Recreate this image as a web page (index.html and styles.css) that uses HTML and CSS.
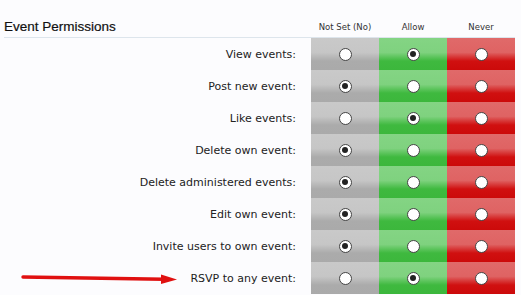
FILE: index.html
```html
<!DOCTYPE html>
<html>
<head>
<meta charset="utf-8">
<link rel="stylesheet" href="styles.css">
</head>
<body>
<div class="perm">
  <div class="head">
    <div class="title">Event Permissions</div>
    <div class="colh">Not Set (No)</div>
    <div class="colh">Allow</div>
    <div class="colh">Never</div>
  </div>
  <div class="row"><div class="label">View events:</div><div class="cell unset"><span class="radio"></span></div><div class="cell allow"><span class="radio on"></span></div><div class="cell never"><span class="radio"></span></div></div>
  <div class="row"><div class="label">Post new event:</div><div class="cell unset"><span class="radio on"></span></div><div class="cell allow"><span class="radio"></span></div><div class="cell never"><span class="radio"></span></div></div>
  <div class="row"><div class="label">Like events:</div><div class="cell unset"><span class="radio"></span></div><div class="cell allow"><span class="radio on"></span></div><div class="cell never"><span class="radio"></span></div></div>
  <div class="row"><div class="label">Delete own event:</div><div class="cell unset"><span class="radio on"></span></div><div class="cell allow"><span class="radio"></span></div><div class="cell never"><span class="radio"></span></div></div>
  <div class="row"><div class="label">Delete administered events:</div><div class="cell unset"><span class="radio on"></span></div><div class="cell allow"><span class="radio"></span></div><div class="cell never"><span class="radio"></span></div></div>
  <div class="row"><div class="label">Edit own event:</div><div class="cell unset"><span class="radio on"></span></div><div class="cell allow"><span class="radio"></span></div><div class="cell never"><span class="radio"></span></div></div>
  <div class="row"><div class="label">Invite users to own event:</div><div class="cell unset"><span class="radio on"></span></div><div class="cell allow"><span class="radio"></span></div><div class="cell never"><span class="radio"></span></div></div>
  <div class="row"><div class="label">
    <svg class="arrow" width="160" height="12" viewBox="0 0 160 12"><path d="M3 4 L144 6.2" stroke="#e01010" stroke-width="3.4" stroke-linecap="round" fill="none"/><path d="M141 1.5 L157 6.6 L141 11 Z" fill="#e01010"/></svg>
    <span>RSVP to any event:</span></div><div class="cell unset"><span class="radio"></span></div><div class="cell allow"><span class="radio on"></span></div><div class="cell never"><span class="radio"></span></div></div>
</div>
</body>
</html>
```
FILE: styles.css
```css
html, body { margin: 0; padding: 0; background: #fcfcfe; }
body { font-family: "DejaVu Sans", Verdana, sans-serif; color: #222; }
.perm { width: 515px; }
.head {
  display: grid;
  margin-left: 4px;
  width: 511px;
  grid-template-columns: 307px 68px 68px 68px;
  height: 37px;
  border-bottom: 1px solid #dde5ec;
  align-items: end;
}
.title {
  font-family: "Liberation Sans", Arial, sans-serif;
  font-size: 13.5px;
  color: #111;
  padding-bottom: 3px;
  -webkit-text-stroke: 0.2px #111;
}
.colh {
  font-size: 8.5px;
  text-align: center;
  color: #333;
  padding-bottom: 5px;
}
.row {
  display: grid;
  grid-template-columns: 311px 68px 68px 68px;
  height: 32px;
}
.label {
  display: flex;
  align-items: center;
  justify-content: flex-end;
  padding-right: 15px;
  font-size: 11px;
  color: #222;
  position: relative;
}
.arrow { position: absolute; left: 20px; top: 11px; }
.cell { display: flex; align-items: center; justify-content: center; }
.unset { background: linear-gradient(to bottom, #c9c9c9 0%, #c6c6c6 45%, #ababab 72%, #aaaaaa 100%); }
.allow { background: linear-gradient(to bottom, #84d484 0%, #7fd27f 45%, #3fb93f 72%, #3cb73c 100%); }
.never { background: linear-gradient(to bottom, #e06a6a 0%, #df6363 45%, #d01010 72%, #cc0a0a 100%); }
.radio {
  width: 11px; height: 11px;
  border-radius: 50%;
  background: #fff;
  border: 1px solid #444;
  box-sizing: content-box;
  display: flex; align-items: center; justify-content: center;
}
.radio.on::after {
  content: "";
  width: 6px; height: 6px;
  border-radius: 50%;
  background: #222;
}
```
